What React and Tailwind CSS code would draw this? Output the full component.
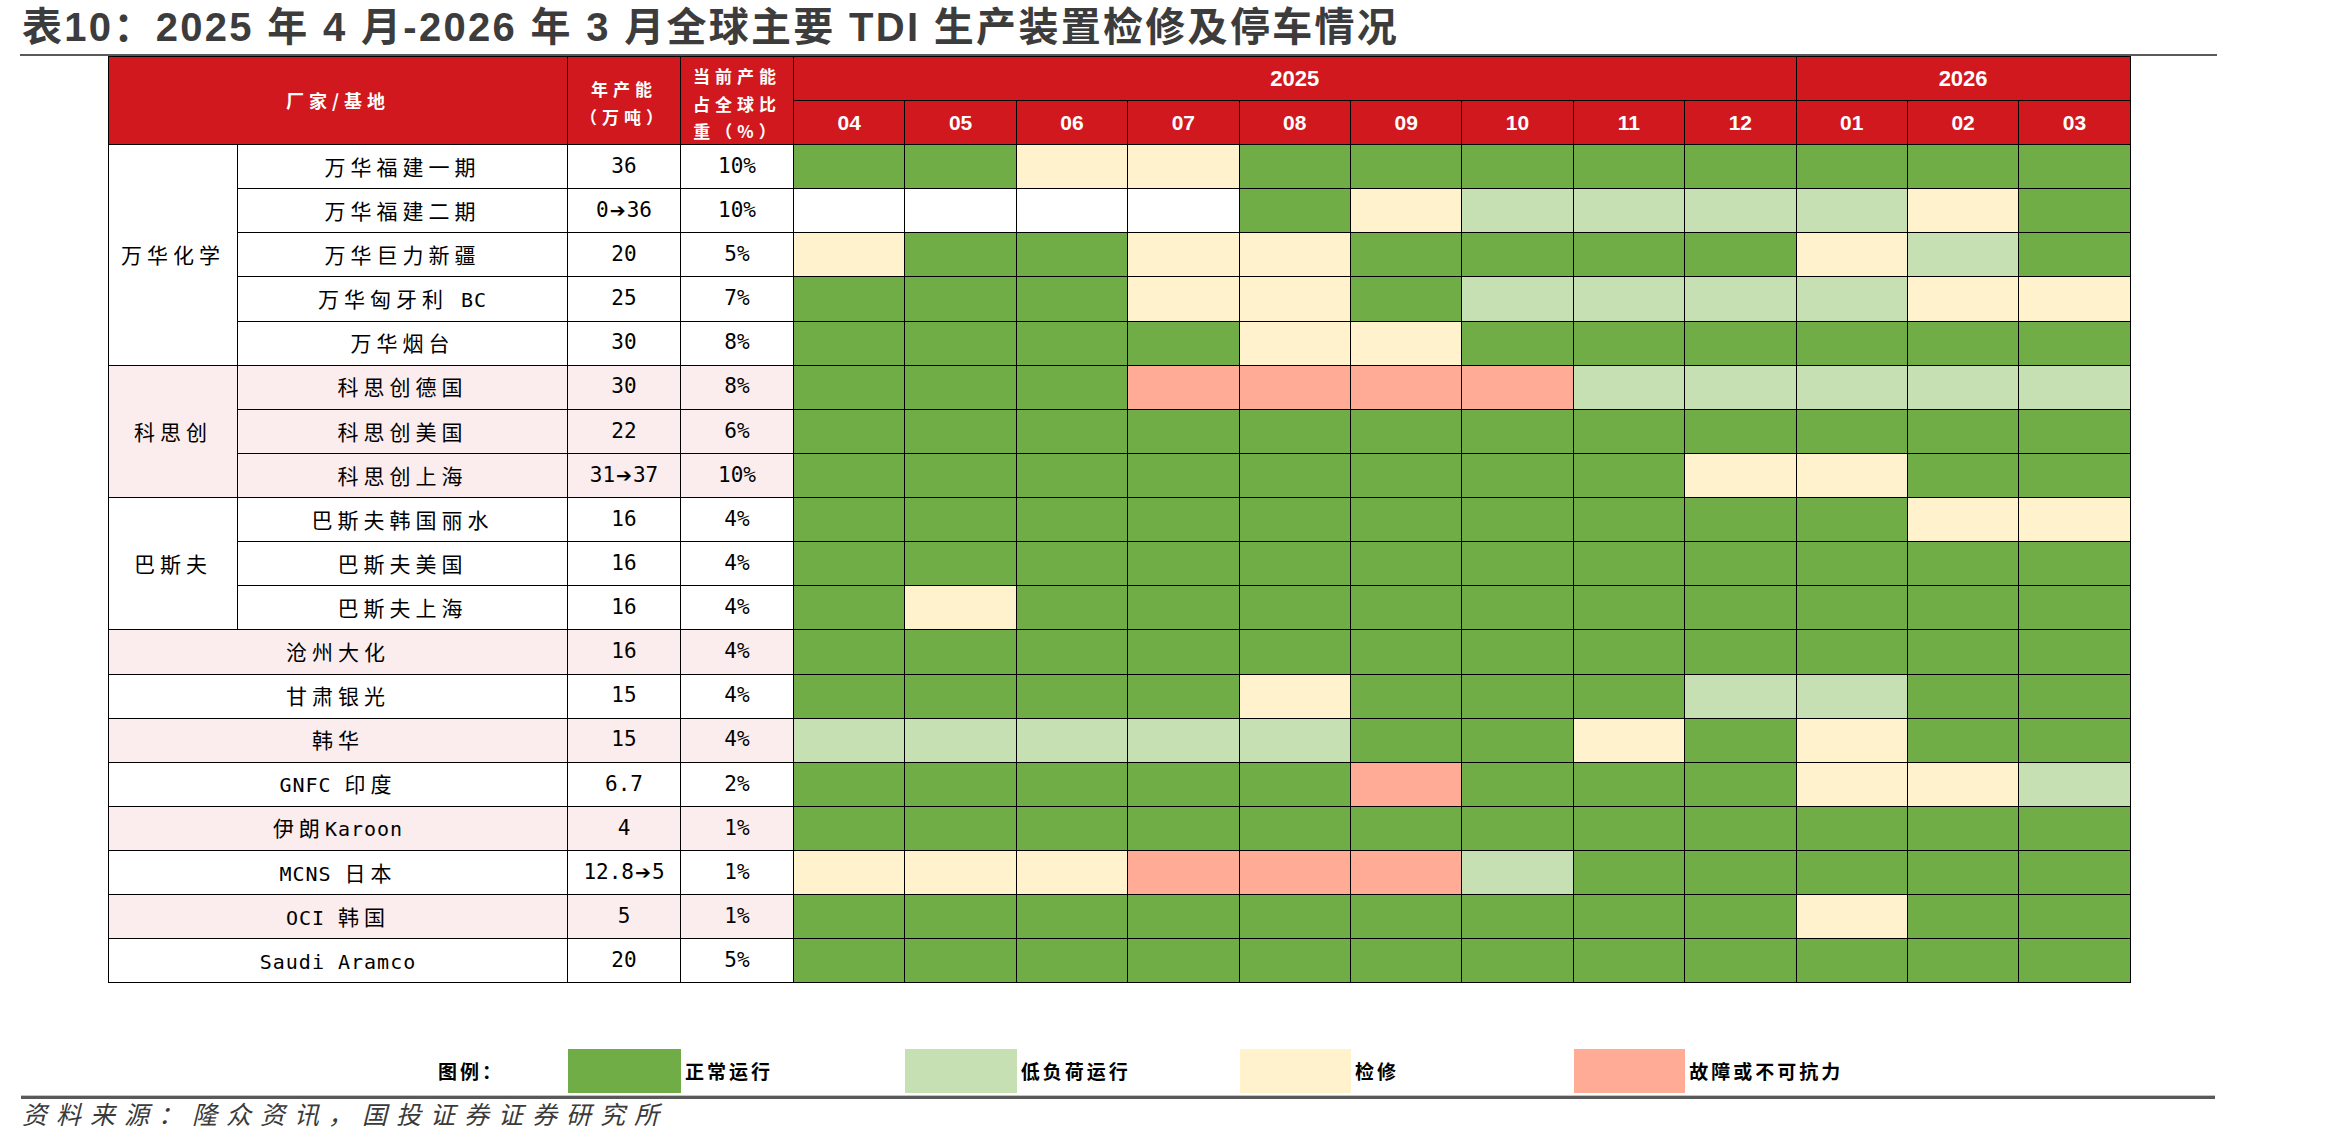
import React from 'react';

const COLS = 'grid-cols-[129px_330px_113px_113px_repeat(12,111.4px)]';
const MC = { G: 'bg-[#70ad47]', L: 'bg-[#c6e0b4]', Y: 'bg-[#fff2cc]', R: 'bg-[#ffab96]', W: 'bg-white' };
const CELL = 'border-r border-b border-black flex items-center justify-center';
const HEAD = 'border-r border-b border-black flex items-center justify-center bg-[#d0181e] text-white font-bold';

const ROWS = [
  { g: '万华化学', span: 5, name: '万华福建一期', cap: '36', pct: '10%', m: 'GGYYGGGGGGGG' },
  { name: '万华福建二期', cap: '0➔36', pct: '10%', m: 'WWWWGYLLLLYG' },
  { name: '万华巨力新疆', cap: '20', pct: '5%', m: 'YGGYYGGGGYLG' },
  { name: '万华匈牙利 BC', cap: '25', pct: '7%', m: 'GGGYYGLLLLYY' },
  { name: '万华烟台', cap: '30', pct: '8%', m: 'GGGGYYGGGGGG' },
  { g: '科思创', span: 3, pink: true, name: '科思创德国', cap: '30', pct: '8%', m: 'GGGRRRRLLLLL' },
  { pink: true, name: '科思创美国', cap: '22', pct: '6%', m: 'GGGGGGGGGGGG' },
  { pink: true, name: '科思创上海', cap: '31➔37', pct: '10%', m: 'GGGGGGGGYYGG' },
  { g: '巴斯夫', span: 3, name: '巴斯夫韩国丽水', cap: '16', pct: '4%', m: 'GGGGGGGGGGYY' },
  { name: '巴斯夫美国', cap: '16', pct: '4%', m: 'GGGGGGGGGGGG' },
  { name: '巴斯夫上海', cap: '16', pct: '4%', m: 'GYGGGGGGGGGG' },
  { full: true, pink: true, name: '沧州大化', cap: '16', pct: '4%', m: 'GGGGGGGGGGGG' },
  { full: true, name: '甘肃银光', cap: '15', pct: '4%', m: 'GGGGYGGGLLGG' },
  { full: true, pink: true, name: '韩华', cap: '15', pct: '4%', m: 'LLLLLGGYGYGG' },
  { full: true, name: 'GNFC 印度', cap: '6.7', pct: '2%', m: 'GGGGGRGGGYYL' },
  { full: true, pink: true, name: '伊朗Karoon', cap: '4', pct: '1%', m: 'GGGGGGGGGGGG' },
  { full: true, name: 'MCNS 日本', cap: '12.8➔5', pct: '1%', m: 'YYYRRRLGGGGG' },
  { full: true, pink: true, name: 'OCI 韩国', cap: '5', pct: '1%', m: 'GGGGGGGGGYGG' },
  { full: true, name: 'Saudi Aramco', cap: '20', pct: '5%', m: 'GGGGGGGGGGGG' },
];

const MONTHS = ['04', '05', '06', '07', '08', '09', '10', '11', '12', '01', '02', '03'];

function Mixed({ text }) {
  const parts = text.split(/([\x20-\x7e]+)/).filter(Boolean);
  return (
    <span className="whitespace-pre">
      {parts.map((p, i) =>
        /^[\x20-\x7e]+$/.test(p) ? (
          <span key={i} className="font-['DejaVu_Sans_Mono',monospace] text-[20px] tracking-[1px]">{p}</span>
        ) : (
          <span key={i} className="tracking-[5px]">{p}</span>
        )
      )}
    </span>
  );
}

function Num({ v }) {
  const parts = v.split('➔');
  return (
    <span className="flex items-center font-['DejaVu_Sans_Mono','DejaVu_Sans',monospace] text-[21px] text-black">
      {parts.map((p, i) => (
        <React.Fragment key={i}>
          {i > 0 && <span className="font-['DejaVu_Sans',sans-serif] text-[19px] font-bold mx-[1px]">➔</span>}
          <span>{p}</span>
        </React.Fragment>
      ))}
    </span>
  );
}

export default function App() {
  const body = [];
  ROWS.forEach((r, i) => {
    const bg = r.pink ? 'bg-[#fbeded]' : 'bg-white';
    if (r.g) {
      const span = r.span === 5 ? 'row-span-5' : 'row-span-3';
      body.push(
        <div key={'g' + i} className={`${CELL} ${span} ${bg} text-[21px]`}>
          <Mixed text={r.g} />
        </div>
      );
    }
    body.push(
      <div key={'n' + i} className={`${CELL} ${r.full ? 'col-span-2' : ''} ${bg} text-[21px]`}>
        <Mixed text={r.name} />
      </div>
    );
    body.push(<div key={'c' + i} className={`${CELL} ${bg}`}><Num v={r.cap} /></div>);
    body.push(<div key={'p' + i} className={`${CELL} ${bg}`}><Num v={r.pct} /></div>);
    r.m.split('').forEach((c, j) => {
      body.push(<div key={'m' + i + '-' + j} className={`${CELL} ${MC[c]}`} />);
    });
  });

  return (
    <div className="w-[2340px] h-[1147px] bg-white overflow-hidden flex flex-col font-['Noto_Sans_CJK_SC',sans-serif] text-black">
      <div className="h-[54px] pl-[22px] flex items-center font-['Liberation_Sans','Noto_Sans_CJK_SC',sans-serif] text-[40px] font-bold tracking-[2.3px] text-[#3c3c3c] whitespace-pre">
        表10：2025 年 4 月-2026 年 3 月全球主要 TDI 生产装置检修及停车情况
      </div>
      <div className="ml-[20px] w-[2197px] h-[2px] bg-[#595959]" />

      <div className={`ml-[108px] w-fit grid ${COLS} grid-rows-[44px_44px_repeat(19,44.13px)] border-l border-t border-black`}>
        <div className={`${HEAD} col-span-2 row-span-2 text-[18px] tracking-[5px]`}>厂家/基地</div>
        <div className={`${HEAD} row-span-2 flex-col text-[17px] leading-[28px] tracking-[5px] pt-[4px]`}>
          <span>年产能</span>
          <span>（万吨）</span>
        </div>
        <div className={`${HEAD} row-span-2 flex-col text-[17px] leading-[27.5px] tracking-[5px] pt-[6px]`}>
          <span>当前产能</span>
          <span>占全球比</span>
          <span>重（%）</span>
        </div>
        <div className={`${HEAD} col-span-9 font-['Liberation_Sans',sans-serif] text-[22px]`}>2025</div>
        <div className={`${HEAD} col-span-3 font-['Liberation_Sans',sans-serif] text-[22px]`}>2026</div>
        {MONTHS.map((m) => (
          <div key={m} className={`${HEAD} font-['Liberation_Sans',sans-serif] text-[21px]`}>{m}</div>
        ))}
        {body}
      </div>

      <div className={`mt-[66px] ml-[108px] pl-px grid ${COLS} h-[44px] font-bold text-[19px] tracking-[3px] text-black`}>
        <div />
        <div className="flex items-center pl-[200px] whitespace-nowrap">图例：</div>
        <div className="bg-[#70ad47]" />
        <div className="flex items-center pl-[4px] whitespace-nowrap">正常运行</div>
        <div />
        <div className="bg-[#c6e0b4]" />
        <div className="flex items-center pl-[4px] whitespace-nowrap">低负荷运行</div>
        <div />
        <div className="bg-[#fff2cc]" />
        <div className="flex items-center pl-[4px] whitespace-nowrap">检修</div>
        <div />
        <div className="bg-[#ffab96]" />
        <div className="flex items-center pl-[4px] whitespace-nowrap">故障或不可抗力</div>
      </div>

      <div className="mt-[2px] ml-[21px] w-[2194px] h-px bg-[#c4c4c4]" />
      <div className="ml-[21px] w-[2194px] h-[3px] bg-[#595959]" />
      <div className="pl-[22px] leading-[28px] text-[25px] italic tracking-[9px] text-[#3a3a3a] whitespace-nowrap">
        资料来源：隆众资讯，国投证券证券研究所
      </div>
    </div>
  );
}
